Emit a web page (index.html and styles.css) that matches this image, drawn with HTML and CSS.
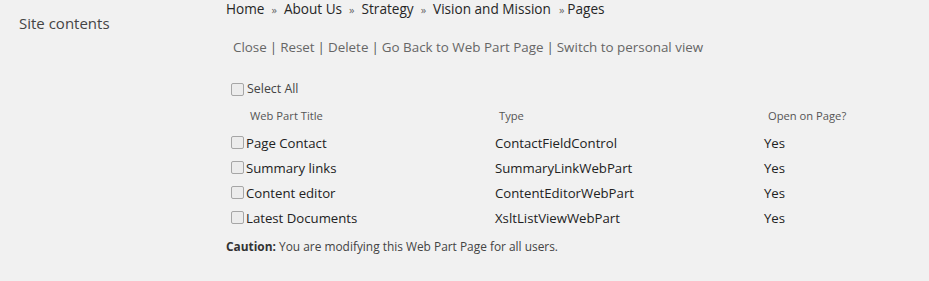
FILE: index.html
```html
<!DOCTYPE html>
<html>
<head>
<meta charset="utf-8">
<link rel="stylesheet" href="styles.css">
</head>
<body>
<div class="page">
  <nav class="side">
    <a class="side-link">Site contents</a>
  </nav>
  <main class="main">
    <div class="crumbs">
      <span>Home</span><span class="sep">»</span><span>About Us</span><span class="sep">»</span><span>Strategy</span><span class="sep">»</span><span>Vision and Mission</span><span class="sep tight">»</span><span>Pages</span>
    </div>
    <div class="toolbar">
      <span>Close</span><span class="bar">|</span><span>Reset</span><span class="bar">|</span><span>Delete</span><span class="bar">|</span><span>Go Back to Web Part Page</span><span class="bar">|</span><span>Switch to personal view</span>
    </div>
    <label class="select-all"><input type="checkbox" class="cb"><span>Select All</span></label>
    <div class="grid">
      <div class="head">Web Part Title</div><div class="head">Type</div><div class="head">Open on Page?</div>
      <label class="cell title"><input type="checkbox" class="cb"><span>Page Contact</span></label><div class="cell">ContactFieldControl</div><div class="cell">Yes</div>
      <label class="cell title"><input type="checkbox" class="cb"><span>Summary links</span></label><div class="cell">SummaryLinkWebPart</div><div class="cell">Yes</div>
      <label class="cell title"><input type="checkbox" class="cb"><span>Content editor</span></label><div class="cell">ContentEditorWebPart</div><div class="cell">Yes</div>
      <label class="cell title"><input type="checkbox" class="cb"><span>Latest Documents</span></label><div class="cell">XsltListViewWebPart</div><div class="cell">Yes</div>
    </div>
    <p class="caution"><b>Caution:</b> You are modifying this Web Part Page for all users.</p>
  </main>
</div>
</body>
</html>
```
FILE: styles.css
```css
html, body {
  margin: 0;
  padding: 0;
  background: #f1f1f1;
}
body {
  font-family: "Open Sans", "Noto Sans", sans-serif;
  color: #333;
}
.page {
  display: flex;
  width: 929px;
  height: 281px;
}
.side {
  width: 226px;
  flex: none;
  padding: 12px 0 0 19px;
  box-sizing: border-box;
}
.side-link {
  font-size: 15px;
  color: #444;
  line-height: 21px;
}
.main {
  flex: 1;
  display: flex;
  flex-direction: column;
}
.crumbs {
  font-size: 13.6px;
  line-height: 17px;
  color: #262626;
  white-space: nowrap;
}
.crumbs .sep {
  color: #666;
  font-size: 11px;
  margin: 0 7px 0 7px;
}
.crumbs .sep.tight {
  margin-left: 8px;
  margin-right: 3px;
}
.toolbar {
  margin: 20px 0 0 7px;
  font-size: 13.4px;
  line-height: 18px;
  color: #666;
  white-space: nowrap;
}
.toolbar .bar {
  color: #555;
  margin: 0 3px;
}
.cb {
  appearance: none;
  -webkit-appearance: none;
  width: 13px;
  height: 13px;
  margin: 0;
  border: 1px solid #a6a6a6;
  border-radius: 2px;
  background: #ececec;
  box-sizing: border-box;
  flex: none;
}
.select-all {
  display: flex;
  align-items: center;
  gap: 3px;
  margin: 25px 0 0 5px;
  font-size: 12.4px;
  line-height: 16px;
  color: #444;
}
.grid {
  display: grid;
  grid-template-columns: 264px 269px 1fr;
  margin: 8px 0 0 5px;
  grid-auto-rows: 25px;
  align-items: center;
}
.head {
  font-size: 11.2px;
  color: #555;
  padding-left: 19px;
  line-height: 16px;
  height: 20px;
}
.head:nth-child(2), .head:nth-child(3) {
  padding-left: 4px;
}
.cell {
  font-size: 13.2px;
  color: #222;
  line-height: 18px;
}
.title {
  display: flex;
  align-items: center;
  gap: 2px;
}
.caution {
  margin: 8px 0 0 0;
  font-size: 11.9px;
  line-height: 16px;
  color: #444;
}
.caution b {
  color: #333;
}
```
